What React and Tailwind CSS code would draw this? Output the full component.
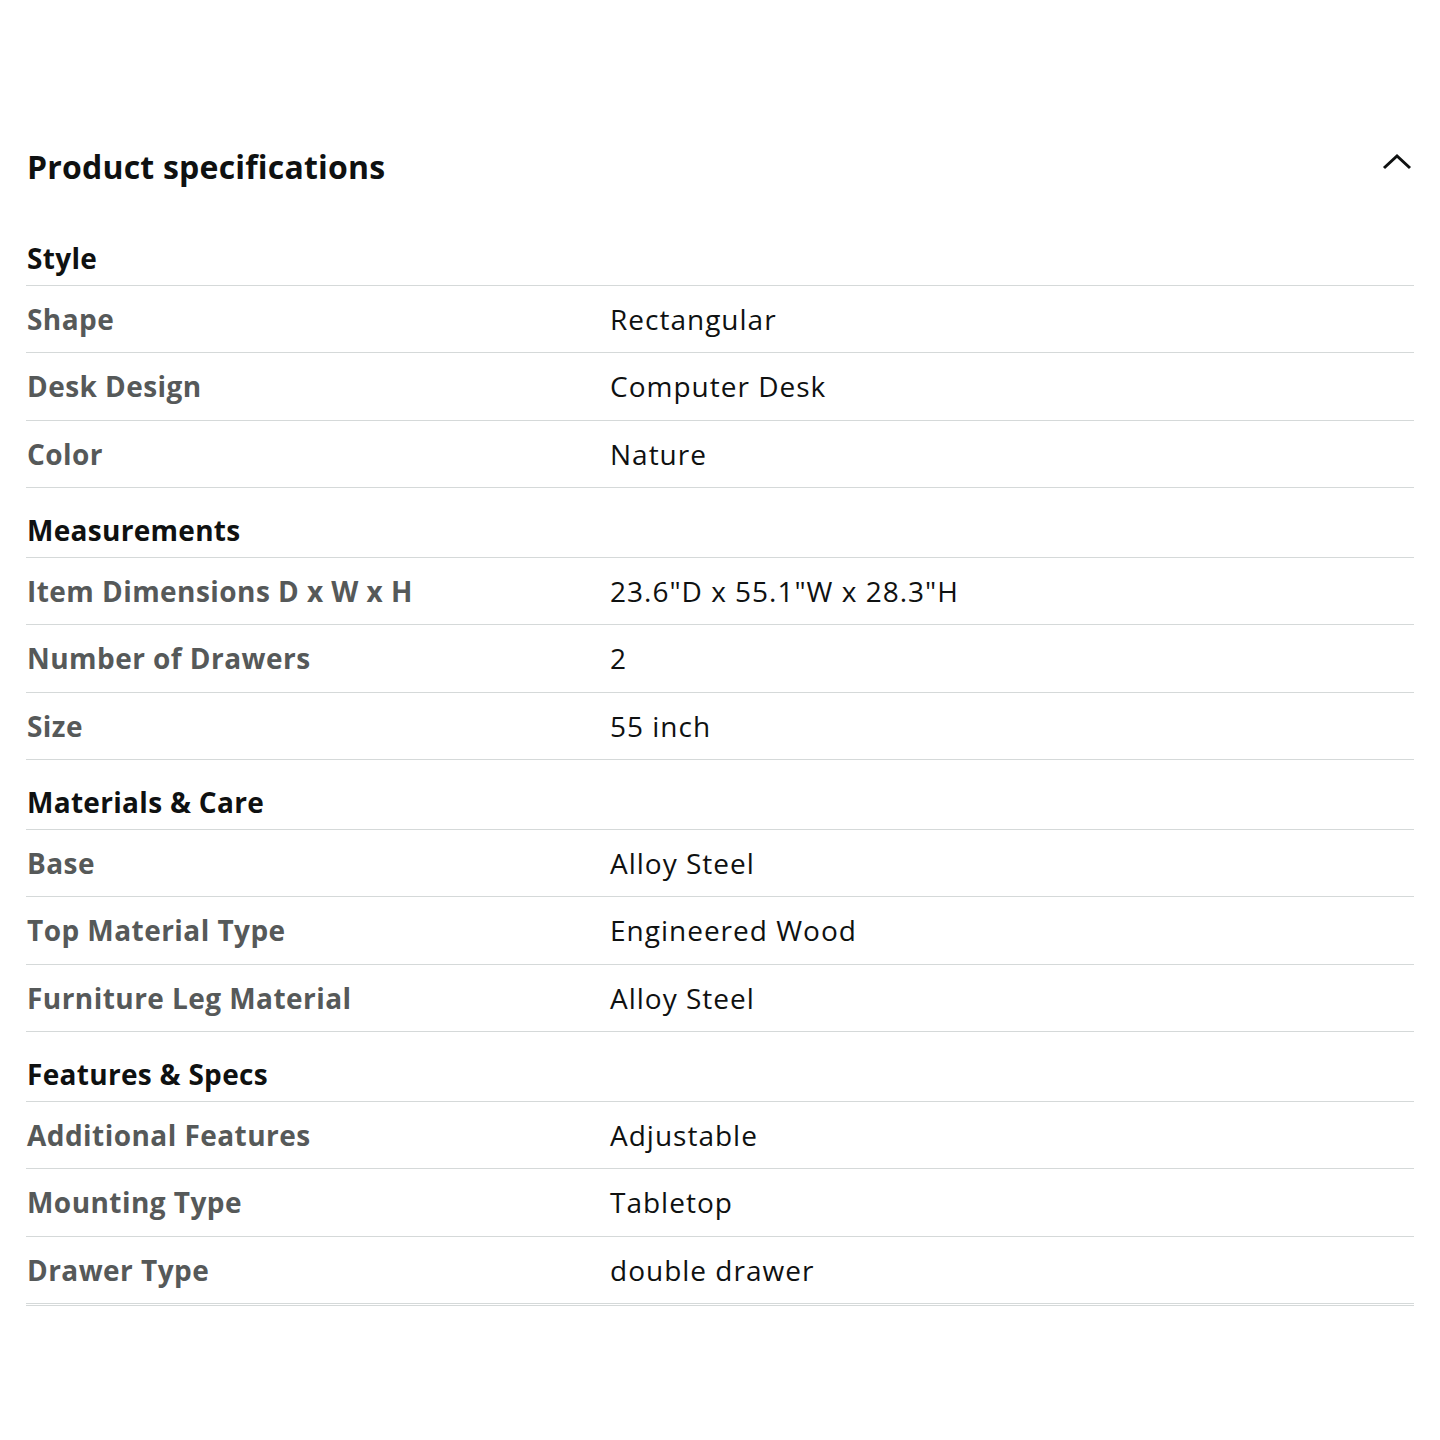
const sections = [
  {
    title: "Style",
    rows: [
      ["Shape", "Rectangular"],
      ["Desk Design", "Computer Desk"],
      ["Color", "Nature"],
    ],
  },
  {
    title: "Measurements",
    rows: [
      ["Item Dimensions D x W x H", "23.6\"D x 55.1\"W x 28.3\"H"],
      ["Number of Drawers", "2"],
      ["Size", "55 inch"],
    ],
  },
  {
    title: "Materials & Care",
    rows: [
      ["Base", "Alloy Steel"],
      ["Top Material Type", "Engineered Wood"],
      ["Furniture Leg Material", "Alloy Steel"],
    ],
  },
  {
    title: "Features & Specs",
    rows: [
      ["Additional Features", "Adjustable"],
      ["Mounting Type", "Tabletop"],
      ["Drawer Type", "double drawer"],
    ],
  },
];

const App = () => {
  return (
    <div
      className="min-h-[1440px] bg-white pl-[26px] pr-[26px] pt-[145px] text-[#0f1111]"
      style={{ fontFamily: '"Open Sans", "Noto Sans", sans-serif' }}
    >
      <div className="flex h-[44px] items-center justify-between pl-[1px]">
        <h2 className="text-[32px] font-bold leading-[44px] tracking-[0.2px]">Product specifications</h2>
        <svg width="32" height="18" viewBox="0 0 32 18" className="-mt-[10px] mr-[1px]">
          <polyline points="3,15 16,3 29,15" fill="none" stroke="#0f1111" strokeWidth="3" />
        </svg>
      </div>

      <div className="mt-[27px]">
        {sections.map((section) => (
          <div key={section.title}>
            <div className="flex h-[69.5px] items-end border-b border-[#d5d9d9] pb-[8px] pl-[1px]">
              <h3 className="text-[28px] font-bold leading-[38px] tracking-[0.3px]">{section.title}</h3>
            </div>
            {section.rows.map(([label, value]) => (
              <div
                key={label}
                className="grid h-[67.5px] grid-cols-[583px_1fr] items-center border-b border-[#d5d9d9] pl-[1px]"
              >
                <span className="text-[28px] font-bold leading-[38px] tracking-[0.45px] text-[#565959]">{label}</span>
                <span className="text-[28px] leading-[38px] tracking-[1px] text-[#0f1111]">{value}</span>
              </div>
            ))}
          </div>
        ))}
        <div className="mt-[1px] border-b border-[#d5d9d9]"></div>
      </div>
    </div>
  );
};

export default App;
